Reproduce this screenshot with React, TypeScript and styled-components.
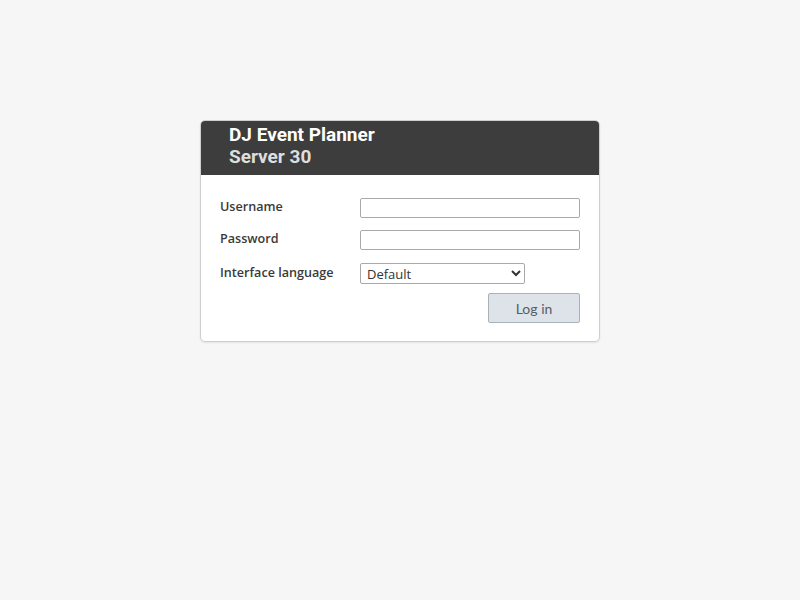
import React from "react";
import styled, { createGlobalStyle } from "styled-components";

const GlobalStyle = createGlobalStyle`
    html, body {
        margin: 0;
        padding: 0;
        background: #f6f6f6;
        font-family: "Open Sans", "Noto Sans", sans-serif;
    }
`;

const Page = styled.div`
    width: 800px;
    height: 600px;
    display: flex;
    justify-content: center;
    padding-top: 120px;
    box-sizing: border-box;
`;

const Card = styled.div`
    width: 400px;
    height: 222px;
    box-sizing: border-box;
    background: #ffffff;
    border: 1px solid #cfcfcf;
    border-radius: 5px;
    box-shadow: 0 1px 2px rgba(0, 0, 0, 0.08);
    overflow: hidden;
`;

const Header = styled.header`
    background: #3d3d3d;
    height: 55px;
    margin: -1px -1px 0;
    padding: 4px 0 0 29px;
    box-sizing: border-box;
    font-family: Roboto, "Liberation Sans", sans-serif;
    font-weight: 700;
    font-size: 19px;
    line-height: 22px;
`;

const Title = styled.div`
    color: #ffffff;
`;

const Subtitle = styled.div`
    color: #dedede;
`;

const Form = styled.form`
    display: grid;
    grid-template-columns: 140px 220px;
    padding: 23px 19px 0 19px;
    align-items: center;
`;

const Label = styled.label<{ $gap?: number }>`
    font-size: 12.6px;
    font-weight: 600;
    color: #3a3a3a;
    margin-top: ${p => (p.$gap ?? 0) - 3}px;
`;

const Input = styled.input<{ $gap?: number }>`
    width: 220px;
    height: 20px;
    margin-top: ${p => p.$gap ?? 0}px;
    box-sizing: border-box;
    border: 1px solid #a9a9a9;
    border-radius: 2px;
    background: #fff;
    padding: 0 4px;
`;

const Select = styled.select`
    width: 165px;
    height: 21px;
    margin-top: 13px;
    box-sizing: border-box;
    border: 1px solid #a9a9a9;
    border-radius: 2px;
    background: #fff;
    font-family: "Open Sans", sans-serif;
    font-size: 13px;
    color: #333;
    padding: 0 2px;
`;

const Actions = styled.div`
    grid-column: 1 / span 2;
    display: flex;
    justify-content: flex-end;
    margin-top: 9px;
`;

const Button = styled.button`
    width: 92px;
    height: 30px;
    border: 1px solid #a9b1b8;
    border-radius: 2px;
    background: #dde3e8;
    color: #555d66;
    font-family: Lato, "Open Sans", sans-serif;
    font-size: 14px;
    cursor: pointer;
`;

export default function App() {
    return (
        <>
            <GlobalStyle />
            <Page>
                <Card>
                    <Header>
                        <Title>DJ Event Planner</Title>
                        <Subtitle>Server 30</Subtitle>
                    </Header>
                    <Form onSubmit={e => e.preventDefault()}>
                        <Label htmlFor="username">Username</Label>
                        <Input id="username" type="text" />
                        <Label htmlFor="password" $gap={12}>Password</Label>
                        <Input id="password" type="password" $gap={12} />
                        <Label htmlFor="lang" $gap={13}>Interface language</Label>
                        <Select id="lang" defaultValue="default">
                            <option value="default">Default</option>
                            <option value="en">English</option>
                        </Select>
                        <Actions>
                            <Button type="submit">Log in</Button>
                        </Actions>
                    </Form>
                </Card>
            </Page>
        </>
    );
}
